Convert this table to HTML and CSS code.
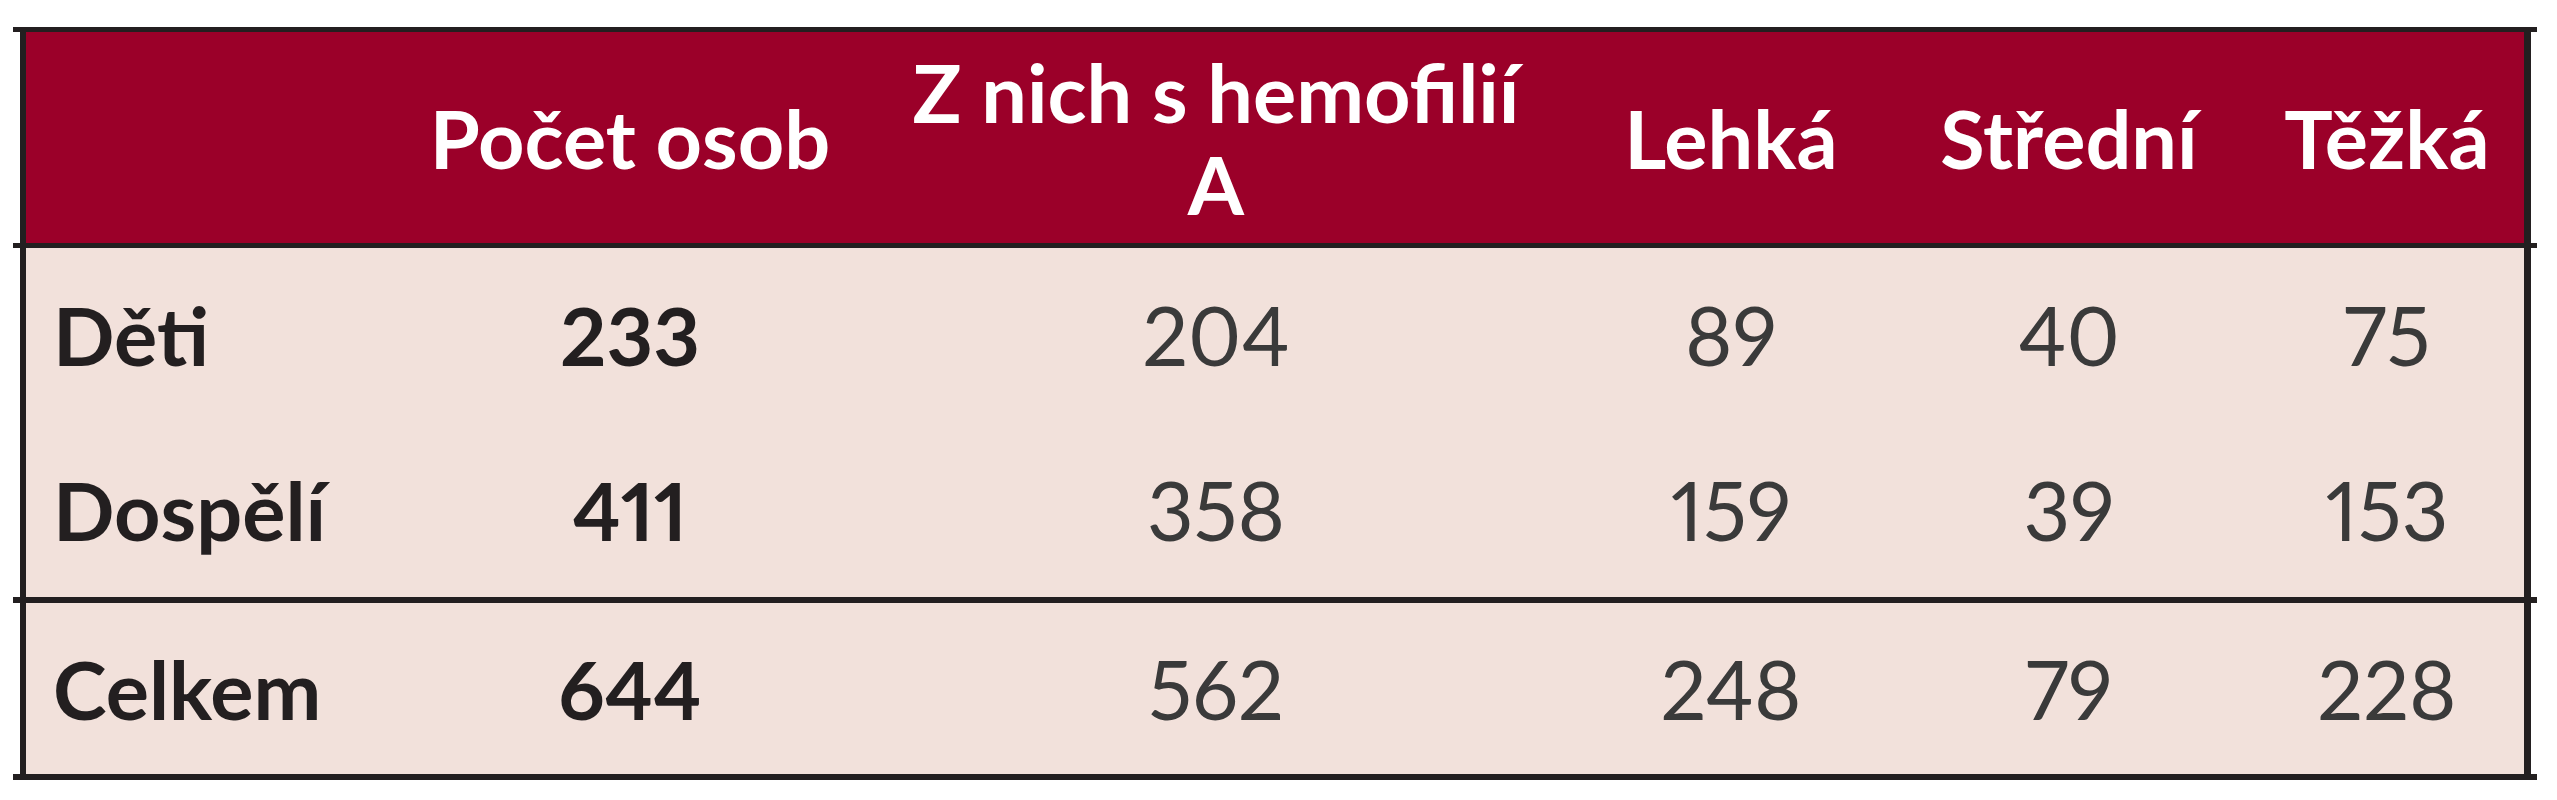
FILE: index.html
```html
<!DOCTYPE html>
<html lang="cs">
<head>
<meta charset="utf-8">
<title>Hemofilie</title>
<link rel="stylesheet" href="styles.css">
</head>
<body>
<div class="tbl">
  <div class="rule"></div>
  <div class="sec head">
    <div class="row hrow">
      <div class="cell lbl"></div>
      <div class="cell">Počet osob</div>
      <div class="cell">Z nich s hemofilií<br>A</div>
      <div class="cell">Lehká</div>
      <div class="cell">Střední</div>
      <div class="cell">Těžká</div>
    </div>
  </div>
  <div class="rule"></div>
  <div class="sec body">
    <div class="row drow">
      <div class="cell lbl">Děti</div>
      <div class="cell strong">233</div>
      <div class="cell num">204</div>
      <div class="cell num">89</div>
      <div class="cell num">40</div>
      <div class="cell num">75</div>
    </div>
    <div class="row drow">
      <div class="cell lbl">Dospělí</div>
      <div class="cell strong">411</div>
      <div class="cell num">358</div>
      <div class="cell num">159</div>
      <div class="cell num">39</div>
      <div class="cell num">153</div>
    </div>
  </div>
  <div class="rule thick"></div>
  <div class="sec body total">
    <div class="row trow">
      <div class="cell lbl">Celkem</div>
      <div class="cell strong">644</div>
      <div class="cell num">562</div>
      <div class="cell num">248</div>
      <div class="cell num">79</div>
      <div class="cell num">228</div>
    </div>
  </div>
  <div class="rule thick"></div>
</div>
</body>
</html>
```
FILE: styles.css
```css
html, body {
  background: #ffffff;
}
body {
  margin: 0;
  padding: 27px 0 0 13px;
  font-family: Lato, "Liberation Sans", sans-serif;
  font-size: 81px;
  color: #231f20;
  font-variant-numeric: proportional-nums;
}
.tbl {
  width: 2524px;
}
.rule {
  height: 5px;
  background: #231f20;
}
.rule.thick {
  height: 6px;
}
.sec {
  margin: 0 6px 0 7px;
  border-left: 6px solid #231f20;
  border-right: 7px solid #231f20;
}
.head {
  background: #9b0029;
}
.body {
  background: #f2e1db;
}
.row {
  display: grid;
  grid-template-columns: 376px 456px 716px 314px 362px 274px;
  align-items: center;
}
.hrow {
  height: 211px;
  color: #ffffff;
  font-weight: 700;
}
.drow {
  height: 174.5px;
}
.trow {
  height: 171px;
}
.cell {
  text-align: center;
  line-height: 92px;
  white-space: nowrap;
}
.cell.lbl {
  text-align: left;
  padding-left: 27px;
  font-weight: 700;
}
.cell.strong {
  font-weight: 700;
}
.cell.num {
  font-weight: 400;
  color: #3a3a3a;
}
```
